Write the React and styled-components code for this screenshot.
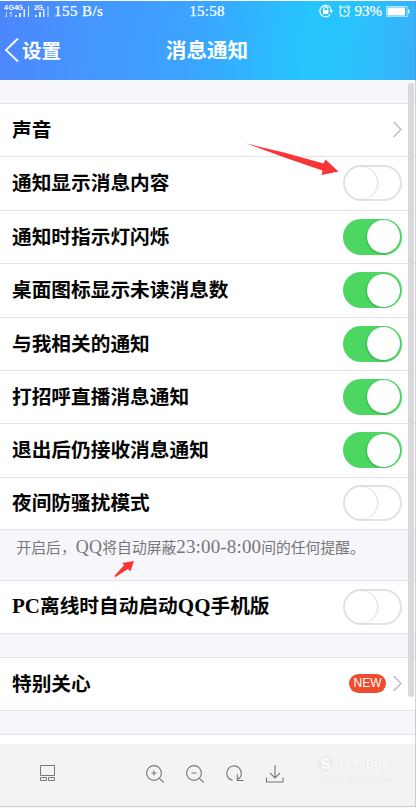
import React from 'react'
import styled, { createGlobalStyle } from 'styled-components'

const GlobalStyle = createGlobalStyle`
  * {
    box-sizing: border-box;
  }
  body {
    margin: 0;
    background: #fff;
    font-family: "Liberation Serif", "Noto Sans CJK SC", serif;
  }
  svg {
    display: block;
    flex: none;
  }
`

const Page = styled.div`
  position: relative;
  display: flex;
  flex-direction: column;
  width: 416px;
  height: 808px;
  padding-top: 1px;
  overflow: hidden;
  background: #fff;
`
const Header = styled.header`
  height: 79px;
  flex: none;
  color: #fff;
  background: linear-gradient(97deg, #4c86fd 0%, #4596fe 22%, #3aa5ff 48%, #25c5fe 73%, #29c2fd 84%, #38b0fb 100%);
`
const StatusBar = styled.div`
  display: grid;
  grid-template-columns: 1fr auto 1fr;
  align-items: center;
  height: 20px;
  padding: 0 6px 0 4px;
  font: 15px/20px "Liberation Serif", serif;
`
const StatusGroup = styled.div`
  display: flex;
  align-items: center;
  justify-content: ${props => props.$end ? 'flex-end' : 'flex-start'};
  gap: ${props => props.$gap || 3}px;
`
const StatusText = styled.span`
  margin-top: -1px;
  letter-spacing: ${props => props.$spacing || 0}px;
  white-space: nowrap;
  -webkit-text-stroke: 0.25px #fff;
`
const NavBar = styled.div`
  display: grid;
  grid-template-columns: 1fr auto 1fr;
  align-items: center;
  height: 57px;
  padding: 0 6px 0 4px;
`
const BackLink = styled.div`
  display: flex;
  align-items: center;
  gap: 3px;
  font: 700 19.5px/28px "Noto Sans CJK SC", sans-serif;
`
const Title = styled.div`
  margin-top: -1px;
  font: 700 20.6px/28px "Noto Sans CJK SC", sans-serif;
`
const Gap = styled.div`
  height: 24px;
  flex: none;
  background: #f6f6fb;
  border-bottom: 1px solid #e3e3e5;
`
const Row = styled.div`
  display: flex;
  align-items: center;
  justify-content: space-between;
  flex: none;
  height: ${props => props.$height}px;
  padding: 0 14px 1px 12px;
  background: #fff;
  border-bottom: 1px solid #e3e3e5;
`
const Label = styled.span`
  margin-top: -2px;
  color: #050505;
  font: 700 19.7px/28px "Noto Sans CJK SC", sans-serif;
  white-space: nowrap;
`
const Latin = styled.span`
  font-family: "Liberation Serif", serif;
  font-size: ${props => props.$size}px;
  font-weight: ${props => props.$weight || 400};
  letter-spacing: ${props => props.$spacing || 0}px;
`
const Note = styled.div`
  height: 51px;
  flex: none;
  padding: 5px 16.5px;
  color: #777;
  font: 400 14.8px/24px "Noto Sans CJK SC", sans-serif;
  white-space: nowrap;
  background: #f6f6fb;
  border-bottom: 1px solid #e3e3e5;
`
const Track = styled.div`
  display: flex;
  align-items: center;
  justify-content: ${props => props.$on ? 'flex-end' : 'flex-start'};
  width: 59px;
  height: 36px;
  padding: ${props => props.$on ? '0 2px' : '0'};
  border-radius: 18px;
  border: ${props => props.$on ? 'none' : '2px solid #e2e2e2'};
  background: ${props => props.$on ? '#4cd763' : '#fff'};
`
const Knob = styled.div`
  width: ${props => props.$on ? 33 : 32}px;
  height: ${props => props.$on ? 33 : 32}px;
  border-radius: 50%;
  background: #fff;
  box-shadow: ${props => props.$on ? '-1px 1px 2px rgba(0, 80, 20, 0.25)' : '1px 0 2px rgba(0, 0, 0, 0.16)'};
`
const RowEnd = styled.div`
  display: flex;
  align-items: center;
  gap: 7px;
`
const NewTag = styled.span`
  width: 37px;
  height: 19px;
  border-radius: 10px;
  color: #fff;
  background: #ee4b30;
  font: 12px/19px "Liberation Sans", sans-serif;
  text-align: center;
`
const Spacer = styled.div`
  flex: 1;
`
const Toolbar = styled.footer`
  display: flex;
  align-items: center;
  flex: none;
  height: 64px;
  padding: 0 0 4px 39px;
  background: #f3f3f3;
  border-bottom: 1px solid #fafafa;
  box-shadow: inset 0 -1px #cfcfcf;
`
const Tools = styled.div`
  display: flex;
  align-items: center;
  gap: 20px;
  margin-left: 89px;
`
const Watermark = styled.div`
  display: grid;
  grid-template-columns: 17px 52px;
  align-items: center;
  column-gap: 5px;
  margin: -7px 0 0 32px;
  color: #fbfbfb;
  text-shadow: 0 0 1px #d0d0d0;
  font: 700 13px/18px "Noto Sans CJK SC", sans-serif;
  white-space: nowrap;
`
const WatermarkUrl = styled.span`
  grid-column: 1 / 3;
  font: 9.2px/14px "Liberation Sans", sans-serif;
`
const ScrollThumb = styled.div`
  position: absolute;
  top: 83px;
  left: 408px;
  width: 6px;
  height: 614px;
  border-radius: 3px;
  background: #d9d9db;
`
const WindowEdge = styled.div`
  position: absolute;
  top: 0;
  right: 0;
  width: 1px;
  height: 807px;
  background: rgba(120, 130, 145, 0.35);
`
const Arrow = styled.svg`
  position: absolute;
  left: ${props => props.$left}px;
  top: ${props => props.$top}px;
`

const SignalIcon = () => (
  <svg width="47" height="14" viewBox="0 0 47 14" fill="#fff">
    <g fontFamily="Liberation Sans" fontSize="7" fontWeight="700">
      <text x="0" y="6" textLength="10">4G</text>
      <text x="10" y="6" textLength="9">4G</text>
      <text x="30" y="6" textLength="9">2G</text>
    </g>
    <path d="M2.5 8v5M1 11.5l1.5 1.5M7 13V8M5.5 9.5L7 8l1.5 1.5" stroke="#fff" strokeWidth=".8" fill="none" opacity=".8" />
    <path d="M11 11h2v2h-2zM15 9h2v4h-2zM19.5 5h1.5v8h-1.5zM24 2h1v11h-1zM31 11h2v2h-2zM35 8h2v5h-2zM39 5h1.5v8h-1.5zM43.5 2h1v11h-1z" opacity=".85" />
  </svg>
)

const LockIcon = () => (
  <svg width="15" height="14" viewBox="0 0 15 14" fill="none" stroke="#fff" strokeWidth="1.2">
    <path d="M11.3 10.3A5.7 5.7 0 1 1 12.3 7" />
    <path d="M10.3 6.5h4l-2 2.5z" fill="#fff" stroke="none" />
    <path d="M4.8 6V4.7a1.9 1.9 0 0 1 3.8 0V6" />
    <rect x="4" y="6" width="5.4" height="4" fill="#fff" stroke="none" />
  </svg>
)

const AlarmIcon = () => (
  <svg width="13" height="14" viewBox="0 0 13 14" fill="none" stroke="#fff" strokeWidth="1.1">
    <circle cx="6.5" cy="7.5" r="4.7" />
    <path d="M6.5 5v2.8h2.3M1 4l2.4-2.5M12 4L9.6 1.5M3 11.5l-1 1.3M10 11.5l1 1.3" />
  </svg>
)

const BatteryIcon = () => (
  <svg width="24" height="11" viewBox="0 0 24 11" fill="none" stroke="#fff">
    <rect x=".5" y=".5" width="20.5" height="10" opacity=".6" />
    <rect x="2" y="2" width="16.5" height="7" fill="#fff" />
    <path d="M22.7 3.5v4" strokeWidth="1.3" />
  </svg>
)

const Chevron = () => (
  <svg width="9" height="17" viewBox="0 0 9 17" fill="none" stroke="#bdbdbf" strokeWidth="1.5">
    <path d="M.7 1l7.2 7.5L.7 16" />
  </svg>
)

const ToolIcon = ({ d, lens }) => (
  <svg width="20" height="20" viewBox="0 0 20 20" fill="none" stroke="#777" strokeWidth="1.1">
    {lens && <circle cx="9" cy="9" r="7.4" />}
    <path d={d} />
  </svg>
)

const Toggle = ({ on }) => (
  <Track $on={on}>
    <Knob $on={on} />
  </Track>
)

const switches = [
  { label: '通知显示消息内容', on: false, height: 54 },
  { label: '通知时指示灯闪烁', on: true, height: 53 },
  { label: '桌面图标显示未读消息数', on: true, height: 54 },
  { label: '与我相关的通知', on: true, height: 53 },
  { label: '打招呼直播消息通知', on: true, height: 53 },
  { label: '退出后仍接收消息通知', on: true, height: 54 },
  { label: '夜间防骚扰模式', on: false, height: 52 }
]

export default function App() {
  return (
    <Page>
      <GlobalStyle />
      <Header>
        <StatusBar>
          <StatusGroup>
            <SignalIcon />
            <StatusText $spacing={0.45}>155 B/s</StatusText>
          </StatusGroup>
          <StatusText $spacing={0.3}>15:58</StatusText>
          <StatusGroup $end $gap={4}>
            <LockIcon />
            <AlarmIcon />
            <StatusText>93%</StatusText>
            <BatteryIcon />
          </StatusGroup>
        </StatusBar>
        <NavBar>
          <BackLink>
            <svg width="15" height="26" viewBox="0 0 15 26" fill="none" stroke="#fff" strokeWidth="1.8">
              <path d="M14 1.5L2 13l12 11.5" />
            </svg>
            设置
          </BackLink>
          <Title>消息通知</Title>
        </NavBar>
      </Header>

      <Gap />
      <Row $height={53}>
        <Label>声音</Label>
        <Chevron />
      </Row>
      {switches.map(item => (
        <Row key={item.label} $height={item.height}>
          <Label>{item.label}</Label>
          <Toggle on={item.on} />
        </Row>
      ))}
      <Note>
        开启后，<Latin $size={18} $spacing={0.3}>QQ</Latin>将自动屏蔽
        <Latin $size={19} $spacing={0.15}>23:00-8:00</Latin>间的任何提醒。
      </Note>
      <Row $height={53}>
        <Label>
          <Latin $size={21} $weight={700}>PC</Latin>离线时自动启动
          <Latin $size={21} $weight={700}>QQ</Latin>手机版
        </Label>
        <Toggle on={false} />
      </Row>
      <Gap />
      <Row $height={53}>
        <Label>特别关心</Label>
        <RowEnd>
          <NewTag>NEW</NewTag>
          <Chevron />
        </RowEnd>
      </Row>
      <Gap />
      <Spacer />

      <Toolbar>
        <svg width="17" height="17" viewBox="0 0 17 17" fill="none" stroke="#777">
          <path d="M1.5 .5h14v10h-14zM1.5 12.5h6v3h-6zM9.5 12.5h6v3h-6z" />
        </svg>
        <Tools>
          <ToolIcon lens d="M14.2 14.2l4.5 4.3M6.5 9h5M9 6.5v5" />
          <ToolIcon lens d="M14.2 14.2l4.5 4.3M6.5 9h5" />
          <ToolIcon d="M7.5 16.3A7.3 7.3 0 1 1 12.5 15.6M12.3 10v6.5H18.5" />
          <ToolIcon d="M10 1v13M5 9l5 5 5-5M1.5 13.5v4.5h16.5v-4.5" />
        </Tools>
        <Watermark>
          <svg width="17" height="17" viewBox="0 0 17 17">
            <circle cx="8.5" cy="8.5" r="7.8" fill="#ebebeb" />
            <path d="M12 5.5C10 3.5 5.5 4 5.5 6.5S12 8.5 12 11 7 13.5 5 11.5" fill="none" stroke="#fbfbfb" strokeWidth="2" />
          </svg>
          <span>搜狗指南</span>
          <WatermarkUrl>zhinan.sogou.com</WatermarkUrl>
        </Watermark>
      </Toolbar>

      <ScrollThumb />
      <WindowEdge />
      <Arrow $left={246} $top={143} width="94" height="33" viewBox="0 0 94 33" fill="#fb3535">
        <path d="M.5 .6L38 9.500 77.500 20.500 79.500 16.500 92.500 28.500 75.500 32 76.500 27.500 40 15z" />
      </Arrow>
      <Arrow $left={114} $top={560} width="21" height="18" viewBox="0 0 21 18" fill="#fb3535">
        <path d="M.3 16L10 5.200 8.300 3 20 1l-3.700 10.500-2.300-2.500L1.500 17z" />
      </Arrow>
    </Page>
  )
}
